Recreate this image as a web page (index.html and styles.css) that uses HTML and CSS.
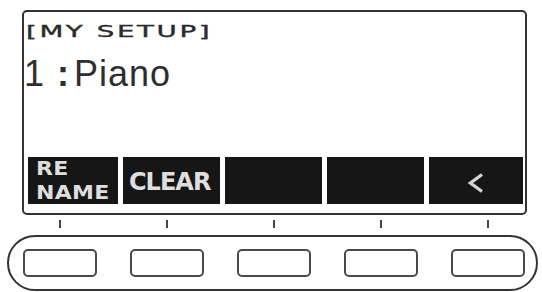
FILE: index.html
```html
<!DOCTYPE html>
<html>
<head>
<meta charset="utf-8">
<link rel="stylesheet" href="styles.css">
</head>
<body>
<div class="device">
  <div class="screen">
    <div class="title">[MY SETUP]</div>
    <div class="value"><span class="num">1</span><span class="colon">:</span><span class="name">Piano</span></div>
    <div class="keys">
      <div class="key key-two"><span class="line">RE</span><span class="line">NAME</span></div>
      <div class="key key-left">CLEAR</div>
      <div class="key"></div>
      <div class="key"></div>
      <div class="key key-center">
        <svg class="chev" width="16" height="20" viewBox="0 0 16 20"><polyline points="14,1.5 2.5,10 14,18.5" fill="none" stroke="#d4d4d4" stroke-width="3.2"/></svg>
      </div>
    </div>
  </div>
  <div class="ticks">
    <span class="tick"></span><span class="tick"></span><span class="tick"></span><span class="tick"></span><span class="tick"></span>
  </div>
  <div class="pill">
    <span class="btn"></span><span class="btn"></span><span class="btn"></span><span class="btn"></span><span class="btn"></span>
  </div>
</div>
</body>
</html>
```

FILE: styles.css
```css
html, body {
  margin: 0;
  padding: 0;
  background: #ffffff;
}
body {
  width: 542px;
  height: 292px;
  overflow: hidden;
  font-family: "Liberation Sans", Arial, sans-serif;
  color: #2b2b2b;
}
.device {
  display: flex;
  flex-direction: column;
  padding-top: 10px;
}
.screen {
  box-sizing: border-box;
  margin-left: 22px;
  width: 505px;
  height: 205px;
  border: 2px solid #333;
  border-radius: 5px;
  display: flex;
  flex-direction: column;
  padding: 12px 2px 9px 4px;
}
.title {
  align-self: flex-start;
  font-family: "DejaVu Sans", sans-serif;
  font-size: 16px;
  line-height: 16px;
  letter-spacing: 1.5px;
  color: #2a2a2a;
  -webkit-text-stroke: 0.35px #2a2a2a;
  transform: scaleX(1.73);
  transform-origin: left center;
  margin-left: -2px;
  white-space: nowrap;
}
.value {
  display: flex;
  align-items: baseline;
  font-size: 36px;
  line-height: 36px;
  margin-top: 16px;
  margin-left: -4px;
  color: #2e2e2e;
}
.colon {
  font-weight: bold;
  margin-left: 13px;
  margin-right: 5px;
}
.name {
  letter-spacing: 1px;
}
.keys {
  margin-top: auto;
  height: 47px;
  display: grid;
  grid-template-columns: 90fr 97fr 97fr 97fr 94fr;
  gap: 5px;
}
.key {
  background: #161616;
  color: #dedede;
  font-family: "DejaVu Sans", sans-serif;
  font-weight: bold;
  display: flex;
  min-width: 0;
}
.key-two {
  flex-direction: column;
  align-items: flex-start;
  font-size: 20px;
  padding: 0 0 0 8px;
  letter-spacing: 0.3px;
}
.line {
  display: block;
  height: 23.5px;
  line-height: 23.5px;
  transform: scaleX(1.1);
  transform-origin: left center;
}
.key-left {
  align-items: center;
  font-size: 24px;
  padding-left: 6px;
  padding-top: 3px;
  letter-spacing: -1px;
}
.key-center {
  align-items: center;
  justify-content: center;
}
.chev {
  display: block;
  margin-top: 4px;
}
.ticks {
  display: flex;
  gap: 105px;
  margin-top: 5px;
  padding-left: 59px;
  height: 8px;
}
.tick {
  width: 2px;
  height: 8px;
  background: #444;
}
.pill {
  box-sizing: border-box;
  margin-top: 7px;
  margin-left: 7px;
  width: 531px;
  height: 56px;
  border: 2px solid #333;
  border-radius: 28px;
  display: flex;
  align-items: center;
  gap: 33px;
  padding-left: 14px;
}
.btn {
  box-sizing: border-box;
  width: 74px;
  height: 28px;
  border: 2px solid #4a4a4a;
  border-radius: 5px;
}
```
